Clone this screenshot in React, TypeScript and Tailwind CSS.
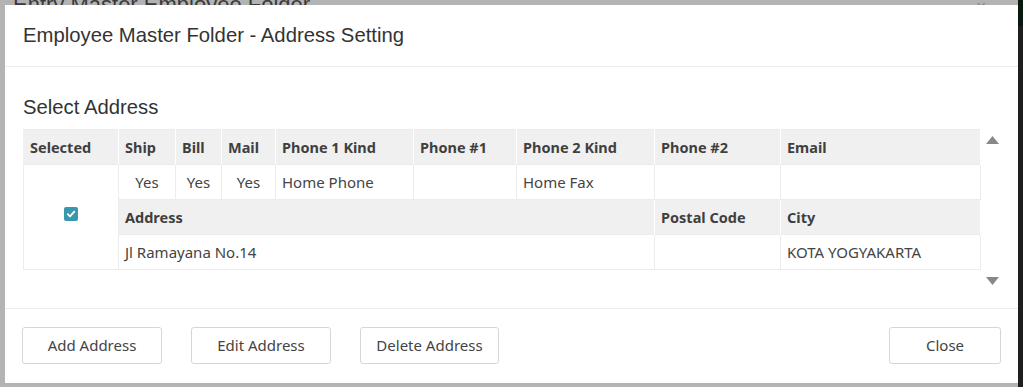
import React from 'react';

const cols = [
  { label: 'Ship', w: 'w-[57px]' },
  { label: 'Bill', w: 'w-[46px]' },
  { label: 'Mail', w: 'w-[54px]' },
  { label: 'Phone 1 Kind', w: 'w-[138px]' },
  { label: 'Phone #1', w: 'w-[103px]' },
  { label: 'Phone 2 Kind', w: 'w-[138px]' },
  { label: 'Phone #2', w: 'w-[126px]' },
  { label: 'Email', w: '' },
];

function CheckBox() {
  return (
    <span className="inline-flex w-[14px] h-[14px] rounded-[2px] bg-[#3b97ad] items-center justify-center">
      <svg width="10" height="10" viewBox="0 0 10 10">
        <path d="M1.8 5.2 L4 7.3 L8.3 2.7" stroke="white" strokeWidth="1.8" fill="none" strokeLinecap="round" strokeLinejoin="round" />
      </svg>
    </span>
  );
}

export default function App() {
  const th = 'h-[35px] px-[6px] text-left font-bold text-[14.5px] text-[#3f3f3f] bg-[#f0f0f0] border-x border-white leading-[20px]';
  const td = 'h-[35px] px-[6px] text-[15px] text-[#444] border border-[#ececec] leading-[20px]';

  return (
    <div className="w-[1023px] h-[387px] bg-[#b3b3b3] flex overflow-hidden relative">
      {/* page behind the dialog */}
      <div className="absolute left-[13px] -top-[12px] text-[22px] text-[#3a3a3a] font-['Liberation_Sans',Arial,sans-serif]">
        Entry Master Employee Folder
      </div>
      <div className="absolute left-[976px] -top-[7px] text-[18px] text-[#8a8a8a]">×</div>

      <div className="flex-1 pt-[5px] pl-[5px] pb-[4px] relative z-10 flex">
        <div className="flex-1 bg-white flex flex-col font-['Noto_Sans',sans-serif] text-[15px]">
          {/* header */}
          <div className="h-[62px] px-[18px] flex items-center border-b border-[#ececec] font-['Liberation_Sans',Arial,sans-serif] text-[20.3px] text-[#333]">
            Employee Master Folder - Address Setting
          </div>

          {/* body */}
          <div className="flex-1 px-[18px] pt-[28px] border-b border-[#ececec]">
            <div className="font-['Liberation_Sans',Arial,sans-serif] text-[20.3px] text-[#333] leading-[24px] mb-[10px]">
              Select Address
            </div>
            <div className="flex items-start">
              <table className="w-[958px] border-collapse border border-[#ececec] table-fixed">
                <thead>
                  <tr>
                    <th className={`${th} w-[95px] border-l-[#f0f0f0]`}>Selected</th>
                    {cols.map(c => (
                      <th key={c.label} className={`${th} ${c.w}`}>{c.label}</th>
                    ))}
                  </tr>
                </thead>
                <tbody>
                  <tr>
                    <td rowSpan={3} className={`${td} text-center align-middle pb-[8px]`}>
                      <CheckBox />
                    </td>
                    <td className={`${td} text-center`}>Yes</td>
                    <td className={`${td} text-center`}>Yes</td>
                    <td className={`${td} text-center`}>Yes</td>
                    <td className={td}>Home Phone</td>
                    <td className={td}></td>
                    <td className={td}>Home Fax</td>
                    <td className={td}></td>
                    <td className={td}></td>
                  </tr>
                  <tr>
                    <th colSpan={6} className={th}>Address</th>
                    <th className={th}>Postal Code</th>
                    <th className={th}>City</th>
                  </tr>
                  <tr>
                    <td colSpan={6} className={td}>Jl Ramayana No.14</td>
                    <td className={td}></td>
                    <td className={td}>KOTA YOGYAKARTA</td>
                  </tr>
                </tbody>
              </table>
              <div className="w-[19px] h-[158px] flex flex-col items-center justify-between pt-[7px] pb-[2px] pl-[3px]">
                <svg width="13" height="8" viewBox="0 0 13 8"><path d="M6.5 0 L13 8 L0 8 Z" fill="#888" /></svg>
                <svg width="13" height="8" viewBox="0 0 13 8"><path d="M0 0 L13 0 L6.5 8 Z" fill="#888" /></svg>
              </div>
            </div>
          </div>

          {/* footer */}
          <div className="h-[74px] px-[17px] pt-[18px] flex items-start">
            <div className="flex gap-[29px]">
              <button className="w-[140px] h-[37px] border border-[#d6d6d6] rounded-[3px] text-[#444]">Add Address</button>
              <button className="w-[140px] h-[37px] border border-[#d6d6d6] rounded-[3px] text-[#444]">Edit Address</button>
              <button className="w-[139px] h-[37px] border border-[#d6d6d6] rounded-[3px] text-[#444]">Delete Address</button>
            </div>
            <button className="ml-auto w-[112px] h-[37px] border border-[#d6d6d6] rounded-[3px] text-[#444]">Close</button>
          </div>
        </div>
      </div>

      {/* dark strip on the right */}
      <div className="w-[5px] h-full bg-[#1e1e1e] flex flex-col">
        <div className="h-[26px] bg-[#08180e]" />
      </div>
    </div>
  );
}
